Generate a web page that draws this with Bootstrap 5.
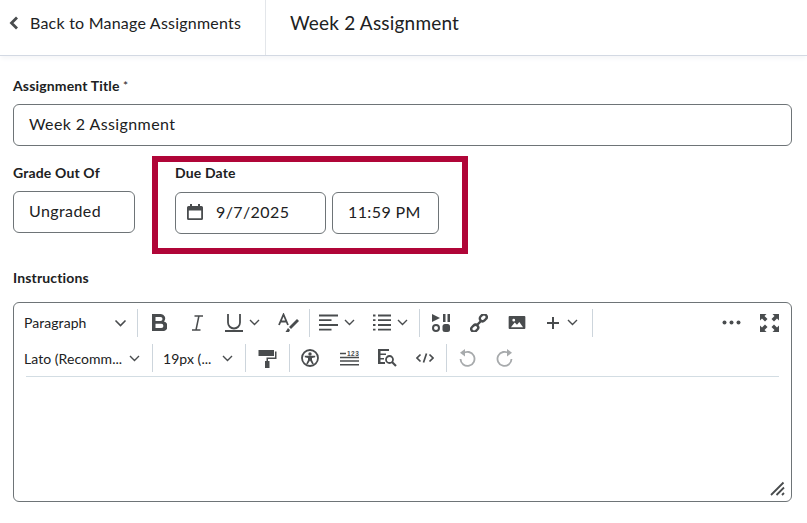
<!DOCTYPE html>
<html lang="en">
<head>
<meta charset="utf-8">
<title>Week 2 Assignment</title>
<link href="https://cdn.jsdelivr.net/npm/bootstrap@5.3.0/dist/css/bootstrap.min.css" rel="stylesheet">
<style>
html,body{height:523px;overflow:hidden}
body{font-family:Lato,"Open Sans",sans-serif;color:#202122;background:#fff}
.topbar{height:56px;border-bottom:1px solid #d3d9e3;box-shadow:0 4px 4px -1px #f6f7f9}
.backcell{width:266px;border-right:1px solid #e3e6ea;padding:0 0 9px 9px;font-size:16px;letter-spacing:.22px;color:#202122}
.backcell svg{margin-right:11px}
.pagetitle{padding:0 0 10px 24px;font-size:19px;letter-spacing:.2px;line-height:1}
.formarea{padding:21px 15px 0 13px}
.fieldlabel{display:block;font-weight:700;font-size:14px;line-height:17px;letter-spacing:.15px;color:#202122;margin:0}
.fieldlabel i{font-style:normal;font-weight:400;font-size:12px;vertical-align:1px}
.ctl{height:42px;border:1px solid #6e7477;border-radius:6px;background:#fff;font-size:16px;letter-spacing:.4px;color:#202122;display:flex;align-items:center;padding:0 0 2px 15px}
.titlectl{margin-top:10px;width:779px}
.graderow{margin-top:10px}
.gradecol{width:139px;padding-top:8px}
.gradectl{width:122px;margin-top:10px}
.duebox{width:316px;height:98px;border:6px solid #b00538;padding:2px 0 0 17px}
.datectl{width:151px;margin-top:11px;padding-left:11px}
.datectl svg{margin-right:13px;flex:none}
.timectl{width:107px;margin-top:11px;margin-left:6px}
.instr{margin-top:15px}
.editor{margin-top:16px;width:779px;height:200px;border:1px solid #6e7477;border-radius:6px;position:relative;padding:2px 0 0 10px}
.tbrow{height:35px;display:flex;align-items:center;color:#494c4e}
.tbrow+.tbrow{height:36px}
.sep{width:1px;height:28px;background:#cdd5dc;flex:none}
.tb{width:38px;height:28px;display:flex;align-items:center;justify-content:center;flex:none}
.tb svg{display:block}
.tb31{width:31px}.tb32{width:32px}.tb29{width:29px}.tb43{width:43px}.tb40{width:40px}.tb41{width:41px}
.combo{display:flex;align-items:center;height:28px;flex:none;color:#494c4e}
.m9{margin-right:9px}.m11{margin-right:11px}.m14{margin-right:14px}
.l2{margin-left:2px}.l3{margin-left:3px}.r2{margin-right:2px}.r3{margin-right:3px}
.pick{font-size:14px;letter-spacing:.05px;color:#202122;display:flex;align-items:center;justify-content:space-between;height:28px;flex:none}
.p113{width:113px}.p116{width:116px}.p70{width:70px}
.s12a{margin:0 10px 0 12px}.s12{margin-left:12px}
.m10{margin-right:10px}
.rule{height:1px;background:#d3dde3;margin:0 12px 0 2px}
.grip{position:absolute;right:5px;bottom:5px}
.num{font:700 6.500px "Liberation Sans",sans-serif;fill:#494c4e;letter-spacing:.5px}
</style>
</head>
<body>
<div class="topbar d-flex align-items-stretch">
  <div class="backcell d-flex align-items-center">
    <svg width="10" height="14" viewBox="0 0 10 14"><path d="M8 1.500 2.500 7 8 12.500" fill="none" stroke="#494c4e" stroke-width="2.800"/></svg>
    <span>Back to Manage Assignments</span>
  </div>
  <div class="pagetitle d-flex align-items-center">Week 2 Assignment</div>
</div>
<div class="formarea">
  <label class="fieldlabel">Assignment Title <i>*</i></label>
  <div class="ctl titlectl">Week 2 Assignment</div>
  <div class="graderow d-flex">
    <div class="gradecol">
      <label class="fieldlabel">Grade Out Of</label>
      <div class="ctl gradectl">Ungraded</div>
    </div>
    <div class="duebox">
      <label class="fieldlabel">Due Date</label>
      <div class="d-flex">
        <div class="ctl datectl">
          <svg width="16" height="16" viewBox="0 0 16 16"><path fill="#494c4e" d="M3 0h2v2h6V0h2v2h1.500A1.500 1.500 0 0 1 16 3.500v11a1.500 1.500 0 0 1-1.500 1.500h-13A1.500 1.500 0 0 1 0 14.500v-11A1.500 1.500 0 0 1 1.500 2H3zM1.800 6.500v7.700h12.400V6.500z"/></svg>
          <span>9/7/2025</span>
        </div>
        <div class="ctl timectl">11:59 PM</div>
      </div>
    </div>
  </div>
  <label class="fieldlabel instr">Instructions</label>
  <div class="editor">
    <div class="tbrow">
      <div class="pick p113"><span>Paragraph</span><svg class="m10" width="13" height="8" viewBox="0 0 13 8"><path d="M1.500 1.500 6.500 6.500 11.500 1.500" fill="none" stroke="#494c4e" stroke-width="1.600"/></svg></div>
      <div class="sep r2"></div>
      <div class="tb"><svg width="15" height="17" viewBox="0 0 15 17"><path fill="#494c4e" fill-rule="evenodd" d="M0 0h8.500a4.500 4.500 0 0 1 3.500 7.500A4.700 4.700 0 0 1 9.500 17H0zm3.500 3v4h5a2 2 0 0 0 0-4zm0 6.800V14h5.800a2.100 2.100 0 0 0 0-4.200z"/></svg></div>
      <div class="tb"><svg width="13" height="16" viewBox="0 0 13 16"><path d="M3.500 1h8.500M1 15h8.500M7.900 1 5 15" fill="none" stroke="#494c4e" stroke-width="1.500"/></svg></div>
      <div class="combo l2"><div class="tb tb31"><svg width="18" height="18" viewBox="0 0 18 18"><path d="M3 0v8.500a6 6 0 0 0 12 0V0M0 17h18" fill="none" stroke="#494c4e" stroke-width="1.800"/></svg></div><svg width="11" height="7" viewBox="0 0 11 7" class="m9"><path d="M1 1 5.500 5.500 10 1" fill="none" stroke="#494c4e" stroke-width="1.400"/></svg></div>
      <div class="tb"><svg width="21" height="20" viewBox="0 0 21 20"><path d="M1 12 5.500 1.500 10 12M2.800 8.500h5.400" fill="none" stroke="#494c4e" stroke-width="1.800"/><path fill="#494c4e" d="M19 6 21 8 13 16l-2-2zM10 15l2 2-1 2H7.500z"/></svg></div>
      <div class="sep l2"></div>
      <div class="combo l3"><div class="tb tb31"><svg width="19" height="17" viewBox="0 0 19 17"><path d="M0 1.500h19M0 6.200h12.500M0 11h19M0 15.700h12.500" fill="none" stroke="#494c4e" stroke-width="1.800"/></svg></div><svg width="11" height="7" viewBox="0 0 11 7" class="m11"><path d="M1 1 5.500 5.500 10 1" fill="none" stroke="#494c4e" stroke-width="1.400"/></svg></div>
      <div class="combo"><div class="tb tb31"><svg width="18" height="17" viewBox="0 0 18 17"><path d="M5 1.500h13M5 6.200h13M5 11h13M5 15.700h13M0 1.500h2.500M0 6.200h2.500M0 11h2.500M0 15.700h2.500" fill="none" stroke="#494c4e" stroke-width="1.800"/></svg></div><svg width="11" height="7" viewBox="0 0 11 7" class="m11"><path d="M1 1 5.500 5.500 10 1" fill="none" stroke="#494c4e" stroke-width="1.400"/></svg></div>
      <div class="sep r2"></div>
      <div class="tb"><svg width="18" height="18" viewBox="0 0 18 18"><path fill="#494c4e" d="M0 0 8 4 0 8zM11 0h2.500v8H11zM15.500 0H18v8h-2.500z"/><circle cx="4" cy="14" r="3" fill="none" stroke="#494c4e" stroke-width="2"/><rect x="10.500" y="10" width="7.500" height="8" rx="2.500" fill="#494c4e"/></svg></div>
      <div class="tb"><svg width="18" height="18" viewBox="0 0 18 18"><g fill="none" stroke="#494c4e" stroke-width="2.400"><rect x="9.500" y="1" width="7.500" height="5.500" rx="2.750" transform="rotate(-45 13.250 3.750)"/><rect x="1" y="11.500" width="7.500" height="5.500" rx="2.750" transform="rotate(-45 4.750 14.250)"/><path d="M6.500 11.500 11.500 6.500"/></g></svg></div>
      <div class="tb"><svg width="18" height="13" viewBox="0 0 18 14"><path fill="#494c4e" fill-rule="evenodd" d="M1 0h16a1 1 0 0 1 1 1v12a1 1 0 0 1-1 1H1a1 1 0 0 1-1-1V1a1 1 0 0 1 1-1zM2.500 12h13L11.500 6.500 9 9.500 6.500 7zM5.500 3a1.500 1.500 0 1 0 0 3 1.500 1.500 0 0 0 0-3z"/></svg></div>
      <div class="combo l2"><div class="tb tb29"><svg width="14" height="14" viewBox="0 0 14 14"><path d="M7 1v12M1 7h12" fill="none" stroke="#494c4e" stroke-width="2"/></svg></div><svg width="11" height="7" viewBox="0 0 11 7" class="m14"><path d="M1 1 5.500 5.500 10 1" fill="none" stroke="#494c4e" stroke-width="1.400"/></svg></div>
      <div class="sep"></div>
      <div class="tb ms-auto"><svg width="19" height="5" viewBox="0 0 19 5"><circle cx="2.500" cy="2.500" r="2" fill="#494c4e"/><circle cx="9.500" cy="2.500" r="2" fill="#494c4e"/><circle cx="16.500" cy="2.500" r="2" fill="#494c4e"/></svg></div>
      <div class="tb r3"><svg width="19" height="18" viewBox="0 0 19 18"><g fill="#494c4e"><path d="M0 0h6.500L4.500 2 7.500 5 5 7.500 2 4.500 0 6.500zM19 0v6.500L17 4.500 14 7.500 11.500 5l3-3-2-2zM0 18v-6.500L2 13.500 5 10.500 7.500 13l-3 3 2 2zM19 18h-6.500l2-2-3-3L14 10.500l3 3 2-2z"/></g></svg></div>
    </div>
    <div class="tbrow">
      <div class="pick p116"><span>Lato (Recomm...</span><svg width="11" height="7" viewBox="0 0 11 7"><path d="M1 1 5.500 5.500 10 1" fill="none" stroke="#494c4e" stroke-width="1.400"/></svg></div>
      <div class="sep s12a"></div>
      <div class="pick p70"><span>19px (...</span><svg width="11" height="7" viewBox="0 0 11 7"><path d="M1 1 5.500 5.500 10 1" fill="none" stroke="#494c4e" stroke-width="1.400"/></svg></div>
      <div class="sep s12"></div>
      <div class="tb tb43"><svg width="19" height="19" viewBox="0 0 18 19"><path fill="#494c4e" d="M0 1h15.500v6H0zM16.500 2.500H18V10H9.500v2H11v7H6.500v-7H8V8.500h8.500z"/></svg></div>
      <div class="sep"></div>
      <div class="tb tb40"><svg width="18" height="18" viewBox="0 0 18 18"><circle cx="9" cy="9" r="8" fill="none" stroke="#494c4e" stroke-width="1.800"/><circle cx="9" cy="5" r="1.700" fill="#494c4e"/><path fill="#494c4e" d="M3.800 6.800 14.200 6.800v1.500L11 9v2l1.800 3.800-1.500.5L9 11.500l-2.300 3.800-1.500-.5L7 11V9l-3.200-.7z"/></svg></div>
      <div class="tb"><svg width="19" height="15" viewBox="0 0 19 15"><path d="M0 6.500h19M0 10h19M0 13.800h19M0 2.500h6" fill="none" stroke="#494c4e" stroke-width="1.600"/><text class="num" x="7" y="5">123</text></svg></div>
      <div class="tb"><svg width="19" height="18" viewBox="0 0 19 18"><path fill="#494c4e" d="M0 0h11v2H2.500v2.500H8V6H2.500v3H6v1.500H2.500V13H7v2H0z"/><circle cx="11.500" cy="10.500" r="3.500" fill="none" stroke="#494c4e" stroke-width="1.800"/><path d="m14 13 4 4" stroke="#494c4e" stroke-width="2.200"/></svg></div>
      <div class="tb"><svg width="18" height="10" viewBox="0 0 18 10"><path d="M4.500 1.500 1 5l3.500 3.500M13.500 1.500 17 5l-3.500 3.500M10.500.5 7.500 9.500" fill="none" stroke="#494c4e" stroke-width="1.700"/></svg></div>
      <div class="sep l2"></div>
      <div class="tb tb41"><svg width="17" height="18" viewBox="0 0 17 18"><path d="M4 4.500A7 7 0 1 1 1.500 10" fill="none" stroke="#a7aaac" stroke-width="1.800"/><path fill="#a7aaac" d="M6 0v7.500L1 3.700z"/></svg></div>
      <div class="tb tb32"><svg width="17" height="18" viewBox="0 0 17 18"><path d="M13 4.500A7 7 0 1 0 15.500 10" fill="none" stroke="#a7aaac" stroke-width="1.800"/><path fill="#a7aaac" d="M11 0v7.500L16 3.700z"/></svg></div>
    </div>
    <div class="rule"></div>
    <svg class="grip" width="16" height="15" viewBox="0 0 16 15"><path d="M1 14 13.500 1.500M6.500 14 14 6.500M12 14l2-2" stroke="#494c4e" stroke-width="1.800" fill="none"/></svg>
  </div>
</div>
<script src="https://cdn.jsdelivr.net/npm/bootstrap@5.3.0/dist/js/bootstrap.bundle.min.js"></script>
</body>
</html>
